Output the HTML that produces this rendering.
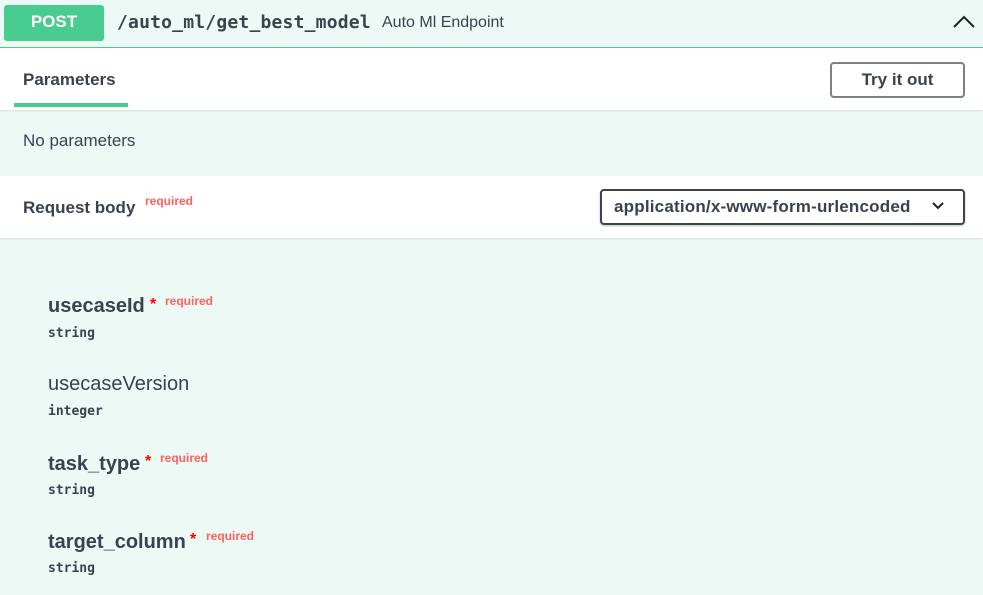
<!DOCTYPE html>
<html><head><style>
body{margin:0;width:983px;height:595px;background:#edf9f4;font-family:"Liberation Sans",sans-serif;color:#3b4151;overflow:hidden;position:relative}
.a{position:absolute}
.hdr{left:0;top:0;width:983px;height:47px;background:#edf9f4}
.post{left:4px;top:5px;width:100px;height:36px;background:#49cc90;border-radius:3px;color:#fff;font-weight:bold;font-size:17px;text-align:center;line-height:34px}
.mono{font-family:"DejaVu Sans Mono","Liberation Mono",monospace;font-weight:bold}
.tab{left:0;top:48px;width:983px;height:62px;background:#fff;box-shadow:0 1px 2px rgba(0,0,0,.1)}
.rb{left:0;top:176px;width:983px;height:62px;background:#fff;box-shadow:0 1px 2px rgba(0,0,0,.1)}
.req{color:#ff6060;font-size:12px;font-weight:bold}
.star{color:#f00;font-size:16px;font-weight:bold}
.name{font-size:20px;font-weight:bold}
.type{font-size:13px}
</style></head><body>
<div class="a hdr"></div>
<div class="a post">POST</div>
<div class="a mono" style="left:117px;top:12px;font-size:18px;letter-spacing:0.2px">/auto_ml/get_best_model</div>
<div class="a" style="left:382px;top:14px;font-size:16px">Auto Ml Endpoint</div>
<svg class="a" style="left:952px;top:12px" width="24" height="20" viewBox="0 0 24 20"><path d="M2 15 L12 5 L22 15" fill="none" stroke="#222" stroke-width="2"/></svg>
<div class="a tab"></div>
<div class="a" style="left:0;top:47px;width:983px;height:1px;background:#49cc90"></div>
<div class="a" style="left:23px;top:70px;font-size:17px;font-weight:bold">Parameters</div>
<div class="a" style="left:14px;top:103px;width:114px;height:4px;background:#49cc90"></div>
<div class="a" style="left:830px;top:62px;width:131px;height:32px;border:2px solid #808080;border-radius:4px;background:#fff;text-align:center;line-height:32px;font-weight:bold;font-size:17px">Try it out</div>
<div class="a" style="left:23px;top:131px;font-size:17px">No parameters</div>
<div class="a rb"></div>
<div class="a" style="left:23px;top:198px;font-size:17px;font-weight:bold">Request body</div>
<div class="a req" style="left:145px;top:194px">required</div>
<div class="a" style="left:600px;top:189px;width:361px;height:32px;border:2px solid #41444e;border-radius:4px;background:#fff;box-shadow:0 1px 2px rgba(0,0,0,.25)"></div>
<div class="a" style="left:614px;top:197px;font-size:17px;font-weight:bold;letter-spacing:0.2px">application/x-www-form-urlencoded</div>
<svg class="a" style="left:931px;top:200px" width="14" height="12" viewBox="0 0 14 12"><path d="M2 3 L7 8 L12 3" fill="none" stroke="#222" stroke-width="2"/></svg>

<div class="a name" style="left:48px;top:295px">usecaseId</div>
<div class="a star" style="left:150px;top:296px">*</div>
<div class="a req" style="left:165px;top:294px">required</div>
<div class="a mono type" style="left:48px;top:326px">string</div>

<div class="a" style="left:48px;top:373px;font-size:20px">usecaseVersion</div>
<div class="a mono type" style="left:48px;top:404px">integer</div>

<div class="a name" style="left:48px;top:453px">task_type</div>
<div class="a star" style="left:145px;top:453px">*</div>
<div class="a req" style="left:160px;top:451px">required</div>
<div class="a mono type" style="left:48px;top:483px">string</div>

<div class="a name" style="left:48px;top:531px">target_column</div>
<div class="a star" style="left:190px;top:531px">*</div>
<div class="a req" style="left:206px;top:529px">required</div>
<div class="a mono type" style="left:48px;top:561px">string</div>
</body></html>
